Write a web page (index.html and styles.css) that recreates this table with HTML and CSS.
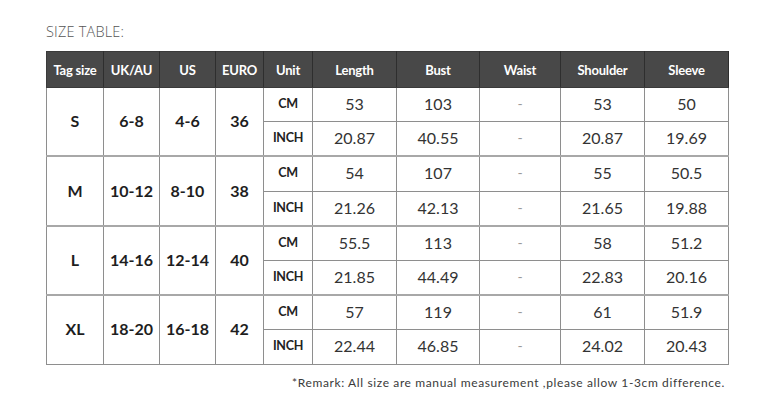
FILE: index.html
```html
<!DOCTYPE html>
<html>
<head>
<meta charset="utf-8">
<link rel="stylesheet" href="styles.css">
</head>
<body>
<div class="page">
  <h1 class="title">SIZE TABLE:</h1>
  <table class="size-table">
    <colgroup>
      <col class="c-tag"><col class="c-uk"><col class="c-us"><col class="c-euro"><col class="c-unit">
      <col class="c-len"><col class="c-bust"><col class="c-waist"><col class="c-shoulder"><col class="c-sleeve">
    </colgroup>
    <thead>
      <tr>
        <th>Tag size</th><th>UK/AU</th><th>US</th><th>EURO</th><th>Unit</th>
        <th>Length</th><th>Bust</th><th>Waist</th><th>Shoulder</th><th>Sleeve</th>
      </tr>
    </thead>
    <tbody>
      <tr class="grp">
        <td rowspan="2" class="key">S</td><td rowspan="2" class="key">6-8</td><td rowspan="2" class="key">4-6</td><td rowspan="2" class="key">36</td>
        <td class="unit">CM</td><td>53</td><td>103</td><td class="dash">-</td><td>53</td><td>50</td>
      </tr>
      <tr>
        <td class="unit">INCH</td><td>20.87</td><td>40.55</td><td class="dash">-</td><td>20.87</td><td>19.69</td>
      </tr>
      <tr class="grp">
        <td rowspan="2" class="key">M</td><td rowspan="2" class="key">10-12</td><td rowspan="2" class="key">8-10</td><td rowspan="2" class="key">38</td>
        <td class="unit">CM</td><td>54</td><td>107</td><td class="dash">-</td><td>55</td><td>50.5</td>
      </tr>
      <tr>
        <td class="unit">INCH</td><td>21.26</td><td>42.13</td><td class="dash">-</td><td>21.65</td><td>19.88</td>
      </tr>
      <tr class="grp">
        <td rowspan="2" class="key">L</td><td rowspan="2" class="key">14-16</td><td rowspan="2" class="key">12-14</td><td rowspan="2" class="key">40</td>
        <td class="unit">CM</td><td>55.5</td><td>113</td><td class="dash">-</td><td>58</td><td>51.2</td>
      </tr>
      <tr>
        <td class="unit">INCH</td><td>21.85</td><td>44.49</td><td class="dash">-</td><td>22.83</td><td>20.16</td>
      </tr>
      <tr class="grp">
        <td rowspan="2" class="key">XL</td><td rowspan="2" class="key">18-20</td><td rowspan="2" class="key">16-18</td><td rowspan="2" class="key">42</td>
        <td class="unit">CM</td><td>57</td><td>119</td><td class="dash">-</td><td>61</td><td>51.9</td>
      </tr>
      <tr>
        <td class="unit">INCH</td><td>22.44</td><td>46.85</td><td class="dash">-</td><td>24.02</td><td>20.43</td>
      </tr>
    </tbody>
  </table>
  <p class="remark">*Remark: All size are manual measurement ,please allow 1-3cm difference.</p>
</div>
</body>
</html>
```

FILE: styles.css
```css
html, body {
  margin: 0;
  padding: 0;
  background: #ffffff;
}

.page {
  width: 769px;
  height: 410px;
  padding: 22px 0 0 46px;
  box-sizing: border-box;
  font-family: Lato, "Open Sans", sans-serif;
}

.title {
  margin: 0 0 10px 0;
  font-family: "Open Sans", Lato, sans-serif;
  font-size: 14.5px;
  line-height: 19px;
  font-weight: 300;
  color: #555555;
  letter-spacing: 0.2px;
}

.size-table {
  border-collapse: collapse;
  table-layout: fixed;
  width: 682px;
}

.c-tag { width: 57px; }
.c-uk { width: 56px; }
.c-us { width: 56px; }
.c-euro { width: 48px; }
.c-unit { width: 49px; }
.c-len { width: 84px; }
.c-bust { width: 83px; }
.c-waist { width: 81px; }
.c-shoulder { width: 84px; }
.c-sleeve { width: 84px; }

.size-table th {
  background: #484848;
  color: #ffffff;
  font-weight: 700;
  font-size: 13px;
  height: 35px;
  padding: 0;
  border: 1px solid #3a3a3a;
  border-right-color: #2e2e2e;
  text-align: center;
  vertical-align: middle;
  letter-spacing: -0.2px;
}

.size-table td {
  border: 1px solid #8e8e8e;
  height: 31.2px;
  padding: 0 0 2px 0;
  text-align: center;
  vertical-align: middle;
  font-size: 16px;
  color: #333333;
}

.size-table tr.grp td {
  border-top: 2px solid #a8a8a8;
}

.size-table tbody tr:first-child td {
  border-top: 1px solid #8e8e8e;
}

.size-table td.key {
  font-weight: 700;
  color: #1e1e1e;
  font-size: 16px;
}

.size-table td.unit {
  font-weight: 700;
  font-size: 12.5px;
  color: #222222;
  letter-spacing: -0.3px;
}

.size-table td.dash {
  color: #9a9a9a;
  font-size: 14px;
}

.remark {
  margin: 10px 0 0 0;
  width: 679px;
  text-align: right;
  font-size: 12px;
  line-height: 16px;
  color: #3a3a3a;
  letter-spacing: 0.62px;
}
```
